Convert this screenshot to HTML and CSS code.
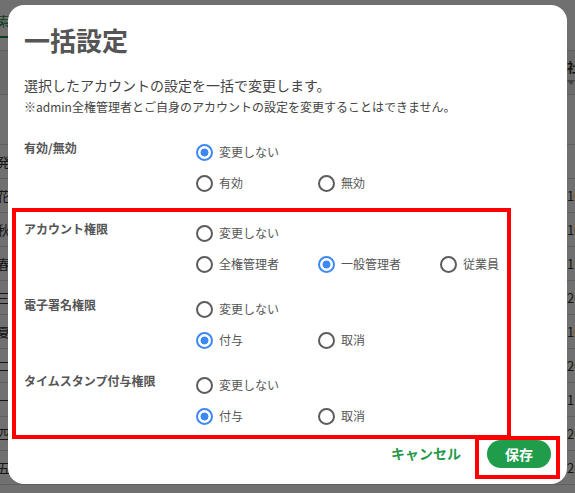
FILE: index.html
```html
<!DOCTYPE html>
<html lang="ja">
<head>
<meta charset="utf-8">
<title>一括設定</title>
<link rel="stylesheet" href="styles.css">
</head>
<body>
<div class="page">
  <div class="tabs"><span class="tab">検索</span></div>
  <div class="thead">
    <div class="cell name"></div>
    <div class="cell mid"></div>
    <div class="cell num">社員番号<span class="sort"></span></div>
  </div>
  <div class="trow blank"><div class="cell name"></div><div class="cell mid"></div><div class="cell num"></div></div>
  <div class="trow"><div class="cell name">山田発</div><div class="cell mid"></div><div class="cell num"></div></div>
  <div class="trow"><div class="cell name">佐藤花</div><div class="cell mid"></div><div class="cell num">1001</div></div>
  <div class="trow"><div class="cell name">鈴木秋</div><div class="cell mid"></div><div class="cell num">1002</div></div>
  <div class="trow"><div class="cell name">高橋春</div><div class="cell mid"></div><div class="cell num">1003</div></div>
  <div class="trow"><div class="cell name">田中三</div><div class="cell mid"></div><div class="cell num">2001</div></div>
  <div class="trow"><div class="cell name">伊藤夏</div><div class="cell mid"></div><div class="cell num">1004</div></div>
  <div class="trow"><div class="cell name">渡辺二</div><div class="cell mid"></div><div class="cell num">2002</div></div>
  <div class="trow"><div class="cell name">山本一</div><div class="cell mid"></div><div class="cell num">1005</div></div>
  <div class="trow"><div class="cell name">中村四</div><div class="cell mid"></div><div class="cell num">2003</div></div>
  <div class="trow"><div class="cell name">小林五</div><div class="cell mid"></div><div class="cell num">2004</div></div>
</div>

<div class="overlay">
  <div class="modal" role="dialog" aria-labelledby="dlg-title">
    <div class="head">
      <h1 class="title" id="dlg-title">一括設定</h1>
      <p class="lead">選択したアカウントの設定を一括で変更します。</p>
      <p class="note">※admin全権管理者とご自身のアカウントの設定を変更することはできません。</p>
    </div>

    <div class="group first">
      <div class="label">有効/無効</div>
      <div class="options">
        <div class="line">
          <label class="opt"><input type="radio" name="active" checked><span>変更しない</span></label>
        </div>
        <div class="line">
          <label class="opt"><input type="radio" name="active"><span>有効</span></label>
          <label class="opt"><input type="radio" name="active"><span>無効</span></label>
        </div>
      </div>
    </div>

    <div class="boxed">
      <div class="group">
        <div class="label">アカウント権限</div>
        <div class="options">
          <div class="line">
            <label class="opt"><input type="radio" name="role"><span>変更しない</span></label>
          </div>
          <div class="line">
            <label class="opt"><input type="radio" name="role"><span>全権管理者</span></label>
            <label class="opt"><input type="radio" name="role" checked><span>一般管理者</span></label>
            <label class="opt"><input type="radio" name="role"><span>従業員</span></label>
          </div>
        </div>
      </div>

      <div class="group">
        <div class="label">電子署名権限</div>
        <div class="options">
          <div class="line">
            <label class="opt"><input type="radio" name="sign"><span>変更しない</span></label>
          </div>
          <div class="line">
            <label class="opt"><input type="radio" name="sign" checked><span>付与</span></label>
            <label class="opt"><input type="radio" name="sign"><span>取消</span></label>
          </div>
        </div>
      </div>

      <div class="group">
        <div class="label">タイムスタンプ付与権限</div>
        <div class="options">
          <div class="line">
            <label class="opt"><input type="radio" name="ts"><span>変更しない</span></label>
          </div>
          <div class="line">
            <label class="opt"><input type="radio" name="ts" checked><span>付与</span></label>
            <label class="opt"><input type="radio" name="ts"><span>取消</span></label>
          </div>
        </div>
      </div>
    </div>

    <div class="foot">
      <button class="cancel" type="button">キャンセル</button>
      <span class="mark"><button class="save" type="button">保存</button></span>
    </div>
  </div>
</div>
</body>
</html>
```

FILE: styles.css
```css
html, body {
  margin: 0;
  padding: 0;
  height: 100%;
  overflow: hidden;
}

body {
  font-family: "Noto Sans CJK JP", "Noto Sans", sans-serif;
  background: #ffffff;
  color: #333;
}

/* ---------- background page ---------- */
.page {
  width: 660px;
}

.tabs {
  height: 38px;
  display: flex;
  align-items: flex-end;
}

.tab {
  display: block;
  margin-left: -16px;
  padding: 0 0 6px;
  font-size: 13px;
  line-height: 18px;
  color: #1f8f45;
  border-bottom: 2px solid #1f8f45;
  width: 28px;
}

.thead,
.trow {
  display: grid;
  grid-template-columns: 10px 557px 90px;
  border-bottom: 1px solid #d6d6d6;
}

.thead {
  margin-top: 12px;
  height: 43px;
  border-top: 1px solid #d6d6d6;
  background: #f4f4f4;
}

.trow {
  height: 33px;
  align-items: center;
}

.trow.blank {
  height: 49px;
}

.cell {
  font-size: 13px;
  line-height: 18px;
  white-space: nowrap;
}

.cell.name {
  direction: rtl;
  text-align: right;
  overflow: visible;
}

.thead .cell.num {
  font-weight: 700;
  padding-top: 7px;
}

.sort {
  display: block;
  width: 0;
  height: 0;
  margin-top: 4px;
  border-left: 4px solid transparent;
  border-right: 4px solid transparent;
  border-top: 5px solid #999;
}

/* ---------- overlay & modal ---------- */
.overlay {
  position: fixed;
  inset: 0;
  background: rgba(0, 0, 0, 0.56);
  display: flex;
  justify-content: center;
  align-items: flex-start;
  padding-top: 5px;
  box-sizing: border-box;
}

.modal {
  width: 559px;
  height: 479px;
  background: #ffffff;
  border-radius: 16px;
  box-sizing: border-box;
  padding-top: 17px;
  color: #555;
}

.head {
  padding: 0 16px;
}

.title {
  margin: 0;
  font-size: 26px;
  line-height: 36px;
  font-weight: 700;
  color: #555;
}

.lead {
  margin: 17px 0 0;
  font-size: 14px;
  line-height: 20px;
  color: #444;
}

.note {
  margin: 3px 0 0;
  font-size: 12px;
  line-height: 18px;
  color: #444;
}

.group {
  display: flex;
}

.group.first {
  margin-top: 20.5px;
  padding-left: 16px;
}

.group + .group {
  margin-top: 14px;
}

.label {
  width: 172px;
  flex: none;
  font-size: 12px;
  line-height: 18px;
  font-weight: 700;
  color: #555;
  padding-top: 2.5px;
}

.options {
  display: flex;
  flex-direction: column;
}

.line {
  display: flex;
  height: 31px;
  align-items: center;
}

.opt {
  width: 122px;
  display: flex;
  align-items: center;
  gap: 6px;
  font-size: 12px;
  line-height: 18px;
  color: #555;
}

.opt input {
  appearance: none;
  -webkit-appearance: none;
  margin: 0;
  width: 17px;
  height: 17px;
  border: 2px solid #5c5c5c;
  border-radius: 50%;
  box-sizing: border-box;
  background: #fff;
  flex: none;
}

.opt input:checked {
  border-color: #3d88f5;
  background: radial-gradient(circle, #3d88f5 0 3.6px, #ffffff 4.3px);
}

.boxed {
  margin: 9.5px 0 0 4px;
  width: 499px;
  box-sizing: border-box;
  border: 4px solid #ff0000;
  padding: 5.5px 0 3.5px 8px;
}

.foot {
  display: flex;
  justify-content: flex-end;
  align-items: flex-start;
  margin-top: -3px;
  padding-right: 7px;
}

.cancel {
  margin: 7px 14px 0 0;
  padding: 0;
  border: none;
  background: none;
  font-family: inherit;
  font-size: 14px;
  line-height: 20px;
  font-weight: 700;
  color: #27994a;
}

.mark {
  display: block;
  border: 4px solid #ff0000;
  padding: 0 5px 7px 8px;
}

.save {
  display: block;
  width: 64px;
  height: 28px;
  border: none;
  border-radius: 14px;
  background: #1f9d4b;
  color: #ffffff;
  font-family: inherit;
  font-size: 14px;
  font-weight: 700;
  padding: 0;
}
```
